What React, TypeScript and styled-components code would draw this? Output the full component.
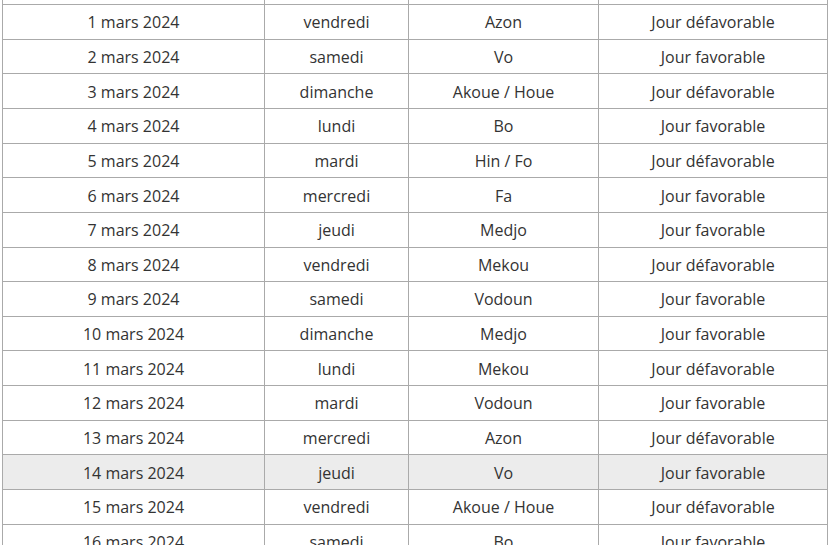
import React from 'react';
import styled, { createGlobalStyle } from 'styled-components';

const GlobalStyle = createGlobalStyle`
  html, body {
    margin: 0;
    padding: 0;
    background: #ffffff;
    overflow: hidden;
  }
  body {
    font-family: "Open Sans", "Liberation Sans", sans-serif;
  }
`;

const Viewport = styled.div`
  width: 832px;
  height: 545px;
  overflow: hidden;
  padding-left: 2px;
  box-sizing: border-box;
`;

const Table = styled.table`
  width: 825px;
  border-collapse: collapse;
  table-layout: fixed;
  margin-top: -30.6px;
  color: #333333;
  font-size: 16px;
`;

const Col = styled.col<{ $w: number }>`
  width: ${p => p.$w}px;
`;

const Row = styled.tr<{ $highlight?: boolean }>`
  background: ${p => (p.$highlight ? '#ececec' : '#ffffff')};
`;

const Cell = styled.td`
  border: 1px solid #aaaaaa;
  height: 34.65px;
  padding: 1px 6px 0;
  box-sizing: border-box;
  text-align: center;
  vertical-align: middle;
  line-height: 20px;
  white-space: nowrap;
`;

type Day = { date: string; weekday: string; divinity: string; kind: string };

const days: Day[] = [
  { date: '1 mars 2024', weekday: 'vendredi', divinity: 'Azon', kind: 'Jour défavorable' },
  { date: '2 mars 2024', weekday: 'samedi', divinity: 'Vo', kind: 'Jour favorable' },
  { date: '3 mars 2024', weekday: 'dimanche', divinity: 'Akoue / Houe', kind: 'Jour défavorable' },
  { date: '4 mars 2024', weekday: 'lundi', divinity: 'Bo', kind: 'Jour favorable' },
  { date: '5 mars 2024', weekday: 'mardi', divinity: 'Hin / Fo', kind: 'Jour défavorable' },
  { date: '6 mars 2024', weekday: 'mercredi', divinity: 'Fa', kind: 'Jour favorable' },
  { date: '7 mars 2024', weekday: 'jeudi', divinity: 'Medjo', kind: 'Jour favorable' },
  { date: '8 mars 2024', weekday: 'vendredi', divinity: 'Mekou', kind: 'Jour défavorable' },
  { date: '9 mars 2024', weekday: 'samedi', divinity: 'Vodoun', kind: 'Jour favorable' },
  { date: '10 mars 2024', weekday: 'dimanche', divinity: 'Medjo', kind: 'Jour favorable' },
  { date: '11 mars 2024', weekday: 'lundi', divinity: 'Mekou', kind: 'Jour défavorable' },
  { date: '12 mars 2024', weekday: 'mardi', divinity: 'Vodoun', kind: 'Jour favorable' },
  { date: '13 mars 2024', weekday: 'mercredi', divinity: 'Azon', kind: 'Jour défavorable' },
  { date: '14 mars 2024', weekday: 'jeudi', divinity: 'Vo', kind: 'Jour favorable' },
  { date: '15 mars 2024', weekday: 'vendredi', divinity: 'Akoue / Houe', kind: 'Jour défavorable' },
  { date: '16 mars 2024', weekday: 'samedi', divinity: 'Bo', kind: 'Jour favorable' },
];

export default function App() {
  return (
    <>
      <GlobalStyle />
      <Viewport>
        <Table>
          <colgroup>
            <Col $w={262} />
            <Col $w={144} />
            <Col $w={190} />
            <Col $w={229} />
          </colgroup>
          <tbody>
            {/* tail of the row scrolled out above the view */}
            <Row>
              <Cell />
              <Cell />
              <Cell />
              <Cell />
            </Row>
            {days.map(d => (
              <Row key={d.date} $highlight={d.date === '14 mars 2024'}>
                <Cell>{d.date}</Cell>
                <Cell>{d.weekday}</Cell>
                <Cell>{d.divinity}</Cell>
                <Cell>{d.kind}</Cell>
              </Row>
            ))}
          </tbody>
        </Table>
      </Viewport>
    </>
  );
}
